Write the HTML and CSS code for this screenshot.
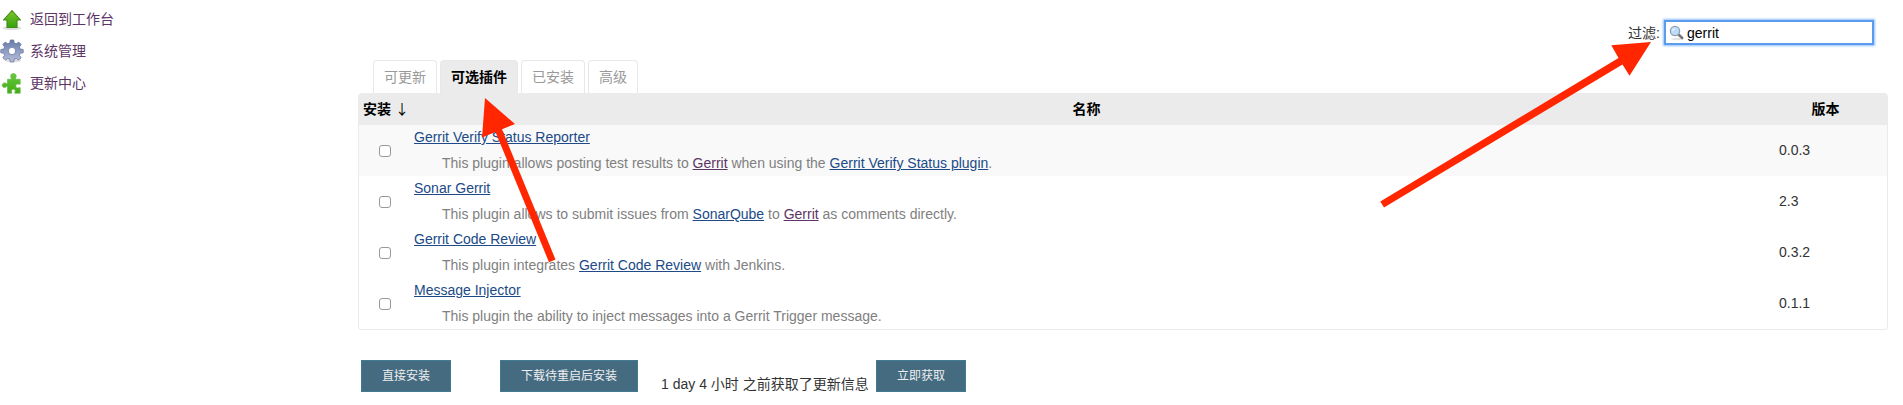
FILE: index.html
```html
<!DOCTYPE html>
<html lang="zh-CN">
<head>
<meta charset="utf-8">
<title>插件管理</title>
<link rel="stylesheet" href="styles.css">
</head>
<body>
<div class="page">
  <nav class="side">
    <a class="task" href="#">
      <svg class="icon" viewBox="0 0 24 24"><defs><linearGradient id="up" x1="0" y1="0" x2="0" y2="1"><stop offset="0" stop-color="#7fc62c"/><stop offset="1" stop-color="#35a010"/></linearGradient></defs><ellipse cx="12" cy="21" rx="9.5" ry="2" fill="#ddd"/><path d="M12 3.500 20.500 13h-3.500v7.500H7V13H3.500z" fill="url(#up)" stroke="#3c8d12" stroke-width="1.100" stroke-linejoin="round"/></svg>
      <span>返回到工作台</span></a>
    <a class="task" href="#">
      <svg class="icon" viewBox="0 0 24 24"><defs><linearGradient id="gr" x1="0" y1="0" x2="0" y2="1"><stop offset="0" stop-color="#657aa9"/><stop offset="1" stop-color="#b9bfdc"/></linearGradient></defs><ellipse cx="13" cy="21.500" rx="8" ry="1.800" fill="#ddd"/><path fill-rule="evenodd" d="M10.300 1h3.400l.5 3 2 .8 2.600-1.700 2.300 2.400-1.700 2.500.8 2 3 .5v3.300l-3 .5-.8 2 1.700 2.500-2.300 2.300-2.600-1.700-2 .8-.5 2.800h-3.400l-.5-2.800-2-.8-2.600 1.700-2.300-2.300 1.700-2.500-.8-2-3-.5v-3.300l3-.5.8-2-1.700-2.500 2.300-2.400 2.600 1.700 2-.8zM12 8.300a3.700 3.700 0 1 0 0 7.400 3.700 3.700 0 0 0 0-7.400z" fill="url(#gr)" stroke="#69779f" stroke-width=".8"/></svg>
      <span>系统管理</span></a>
    <a class="task" href="#">
      <svg class="icon" viewBox="0 0 24 24"><defs><linearGradient id="pz" x1="0" y1="0" x2="0" y2="1"><stop offset="0" stop-color="#67c83c"/><stop offset="1" stop-color="#42ad18"/></linearGradient></defs><path d="M7.500 7.500h3.700c.5-1-.7-1.700-.5-3.200.2-2 1.500-2.500 2.800-2.500s2.800.8 2.700 2.700c0 1.300-1 1.900-.6 3h4.600v4.800c-1 .5-1.600-.3-2.700-.1-1.300.3-1.700 1.200-1.700 2s.6 1.700 1.700 1.900c1.100.2 1.700-.6 2.700-.2v5.500h-5.300c-.5-1 .4-1.500.3-2.500-.2-1-1-1.500-1.900-1.500s-1.800.5-1.900 1.600c0 1 .7 1.400.3 2.400H7.500v-6.500c-1-.5-1.600.8-3 .8-1.700 0-2.300-1.200-2.300-2.300s.8-2.300 2.300-2.300c1.400 0 2 1 3 .6z" transform="translate(0 .8)" fill="url(#pz)" stroke="#65b846" stroke-width=".7"/></svg>
      <span>更新中心</span></a>
  </nav>
  <main class="main">
    <div class="filter">
      <span>过滤:</span>
      <div class="search">
        <svg class="lens" viewBox="0 0 16 16"><ellipse cx="8" cy="14" rx="6" ry="1.200" fill="#e4e4e4"/><path d="M9.500 9.500l3.700 3.500" stroke="#777" stroke-width="2.600" stroke-linecap="round"/><circle cx="6" cy="6" r="4.600" fill="#bcdcfa" stroke="#91a0b8" stroke-width="1.300"/><path d="M3.800 6a2.300 2.300 0 0 1 2.200-2.200" fill="none" stroke="#edf7ff" stroke-width="1.200"/></svg>
        <span>gerrit</span>
      </div>
    </div>
    <div class="tabs">
      <div class="tab t1">可更新</div><div class="tab t2 active">可选插件</div><div class="tab t3">已安装</div><div class="tab t4">高级</div>
    </div>
    <div class="plugins">
      <div class="row head"><div>安装 <span class="sort">↓</span></div><div class="center">名称</div><div class="center">版本</div></div>
      <div class="row odd"><i class="check"></i><div class="info"><a href="#">Gerrit Verify Status Reporter</a><p>This plugin allows posting test results to <a class="seen" href="#">Gerrit</a> when using the <a href="#">Gerrit Verify Status plugin</a>.</p></div><div class="ver">0.0.3</div></div>
      <div class="row"><i class="check"></i><div class="info"><a href="#">Sonar Gerrit</a><p>This plugin allows to submit issues from <a href="#">SonarQube</a> to <a class="seen" href="#">Gerrit</a> as comments directly.</p></div><div class="ver">2.3</div></div>
      <div class="row"><i class="check"></i><div class="info"><a href="#">Gerrit Code Review</a><p>This plugin integrates <a href="#">Gerrit Code Review</a> with Jenkins.</p></div><div class="ver">0.3.2</div></div>
      <div class="row"><i class="check"></i><div class="info"><a href="#">Message Injector</a><p>This plugin the ability to inject messages into a Gerrit Trigger message.</p></div><div class="ver">0.1.1</div></div>
    </div>
    <div class="actions">
      <div class="btn b1">直接安装</div>
      <div class="btn b2">下载待重启后安装</div>
      <div class="note">1 day 4 小时 之前获取了更新信息</div>
      <div class="btn b1">立即获取</div>
    </div>
  </main>
  <svg class="arrows" viewBox="0 0 1903 405"><path d="M485 98 515 124 502 129.300 555.500 259.500 549 262.200 495.500 132 482 137.500zM1651 42 1629.500 75.700 1622.500 64.500 1384 207.500 1380.300 201.500 1618.500 58 1611.300 45.300z" fill="#ff2600"/></svg>
</div>
</body>
</html>
```

FILE: styles.css
```css
* { box-sizing: border-box; }
body { margin: 0; background: #fff; color: #333; font: 14px/20px "Liberation Sans", "Noto Sans CJK SC", sans-serif; }
.page { position: relative; display: flex; width: 1903px; height: 405px; overflow: hidden; }
.side { width: 358px; padding-top: 3px; }
.task { display: flex; align-items: center; gap: 6px; height: 32px; color: #5c3566; text-decoration: none; }
.icon { width: 24px; height: 24px; }
.main { width: 1530px; display: flex; flex-direction: column; }
.filter { display: flex; align-items: center; justify-content: flex-end; gap: 4px; height: 60px; padding: 5px 14px 0 0; }
.search { display: flex; align-items: center; gap: 2px; width: 210px; height: 25px; padding-left: 3px; border: 2px solid #5b9ced; box-shadow: 0 0 2px 1px #8fc1ff; color: #000; }
.lens { width: 16px; height: 16px; }
.tabs { display: flex; gap: 3px; height: 33px; padding-left: 15px; }
.tab { border: 1px solid #e8e8e8; border-bottom: 0; border-radius: 4px 4px 0 0; text-align: center; color: #999; line-height: 32px; }
.t1, .t3 { width: 64px; }
.t2 { width: 78px; }
.t4 { width: 50px; }
.active { background: #ebebeb; color: #000; font-weight: bold; }
.plugins { height: 237px; border: 1px solid #ebebeb; border-top: 0; border-radius: 4px; overflow: hidden; }
.row { display: grid; grid-template-columns: 50px 1353px 125px; height: 51px; }
.head { height: 32px; background: #ebebeb; color: #000; font-weight: bold; line-height: 32px; }
.head > div:first-child { padding-left: 4px; white-space: nowrap; }
.sort { font-family: "Noto Sans CJK SC", sans-serif; font-weight: normal; line-height: 1; }
.center { padding-left: 2px; text-align: center; }
.odd { background: #f9f9f9; }
.check { width: 12px; height: 12px; margin: 20px 0 0 20px; border: 1px solid #999; border-radius: 3px; background: #fff; }
.info { padding: 2px 0 0 5px; }
.info a { color: #204a87; text-decoration: underline; }
.info a.seen { color: #5c3566; }
.info p { margin: 6px 0 0 28px; color: #808080; }
.ver { padding: 15px 0 0 17px; }
.actions { display: flex; height: 62px; padding: 30px 0 0 3px; }
.btn { height: 32px; background: #446b80; border: 1px solid #417a91; color: #eee; font-size: 12px; line-height: 30px; text-align: center; }
.b1 { width: 90px; }
.b2 { width: 138px; margin-left: 49px; }
.note { width: 238px; padding: 14px 0 0 23px; white-space: nowrap; }
.arrows { position: absolute; left: 0; top: 0; width: 1903px; height: 405px; pointer-events: none; }
```
